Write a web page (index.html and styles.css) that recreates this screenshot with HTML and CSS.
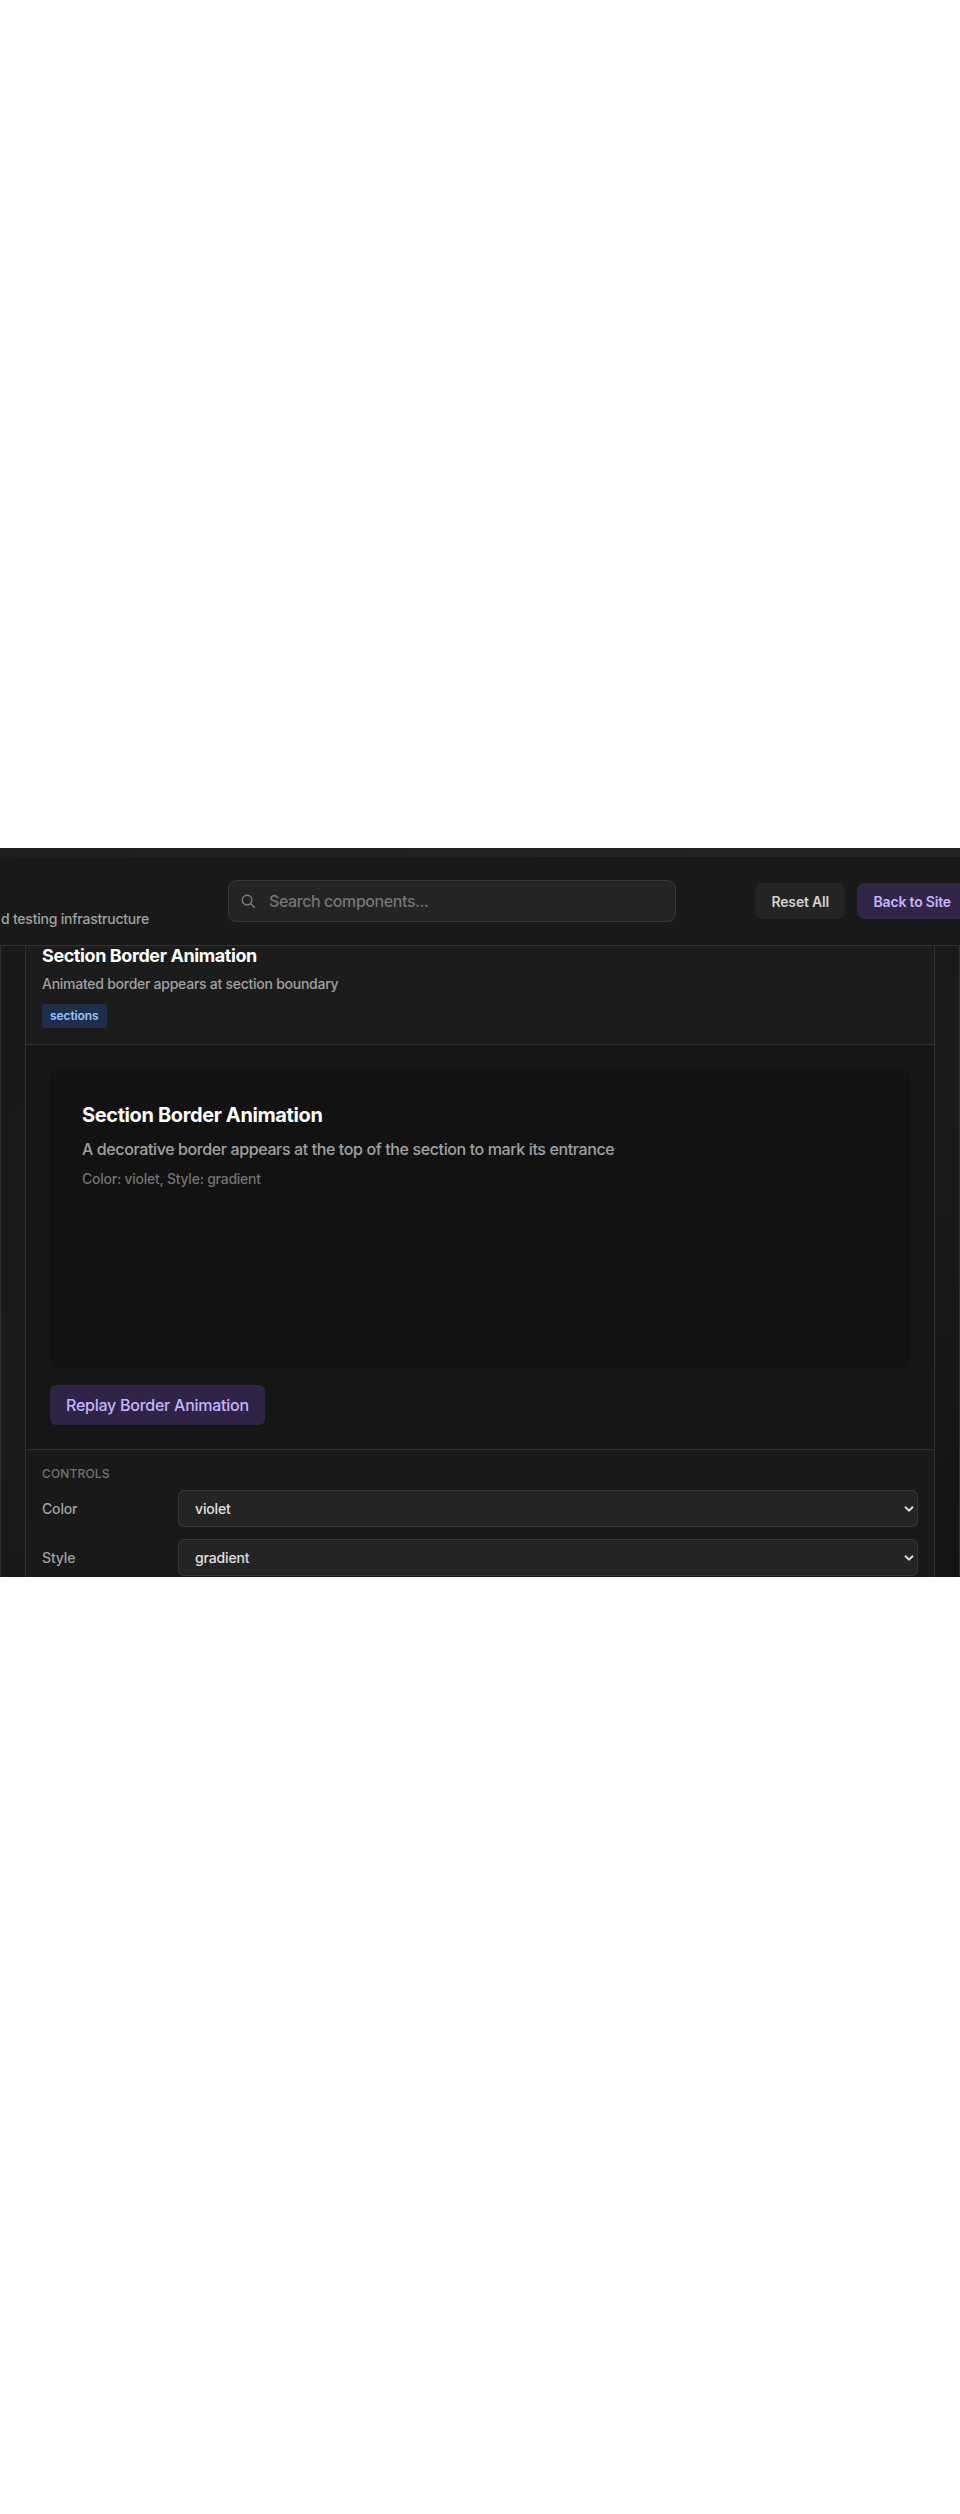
FILE: index.html
```html
<!DOCTYPE html>
<html lang="en">
<head>
<meta charset="utf-8">
<title>Component Playground</title>
<link rel="stylesheet" href="styles.css">
</head>
<body>
<div class="app">
  <header class="header">
    <p class="tagline">d testing infrastructure</p>
    <div class="search">
      <svg class="search-icon" viewBox="0 0 16 16" fill="none" stroke="currentColor" stroke-width="1.4" stroke-linecap="round"><circle cx="6.5" cy="6.5" r="5.2"/><path d="M10.4 10.4 14.2 14.2"/></svg>
      <span class="placeholder">Search components...</span>
    </div>
    <div class="actions">
      <button class="btn btn-reset">Reset All</button>
      <button class="btn btn-back">Back to Site</button>
    </div>
  </header>
  <main class="main">
    <article class="card">
      <div class="card-head">
        <h3 class="card-title">Section Border Animation</h3>
        <p class="card-desc">Animated border appears at section boundary</p>
        <span class="badge">sections</span>
      </div>
      <div class="stage">
        <div class="preview">
          <h4 class="preview-title">Section Border Animation</h4>
          <p class="preview-text">A decorative border appears at the top of the section to mark its entrance</p>
          <p class="preview-meta">Color: violet, Style: gradient</p>
        </div>
        <button class="replay">Replay Border Animation</button>
      </div>
      <div class="controls">
        <h4 class="controls-title">CONTROLS</h4>
        <div class="row">
          <span class="label">Color</span>
          <div class="select"><span>violet</span><svg class="chevron" viewBox="0 0 10 6" fill="none" stroke="currentColor" stroke-width="1.9"><path d="M1 .8 5 4.6 9 .8"/></svg></div>
        </div>
        <div class="row">
          <span class="label">Style</span>
          <div class="select"><span>gradient</span><svg class="chevron" viewBox="0 0 10 6" fill="none" stroke="currentColor" stroke-width="1.9"><path d="M1 .8 5 4.6 9 .8"/></svg></div>
        </div>
      </div>
    </article>
  </main>
</div>
</body>
</html>
```
FILE: styles.css
```css
* { box-sizing: border-box; margin: 0; }
body { background: #fff; padding: 848px 0 937px; font-family: Inter, "Liberation Sans", sans-serif; font-weight: 450; color: #fff; }
button { border: 0; font-family: inherit; white-space: nowrap; }
.app { width: 960px; height: 729px; overflow: hidden; background: linear-gradient(90deg, #1e1e1e, #252525); padding-top: 9px; }
.header { display: flex; height: 89px; overflow: hidden; background: #191919; border-bottom: 1px solid #303030; }
.tagline { flex: none; width: 228px; padding: 52px 0 0 1px; font-size: 14px; line-height: 20px; letter-spacing: -0.22px; color: #a1a1a1; white-space: nowrap; }
.search { display: flex; flex: none; align-items: center; width: 448px; height: 42px; margin-top: 23px; padding-left: 12px; gap: 13px; border: 1px solid #383838; border-radius: 8px; background: #242424; color: #757575; }
.search-icon { width: 15px; height: 15px; color: #808080; }
.placeholder { font-size: 16px; line-height: 24px; letter-spacing: -0.42px; }
.actions { display: flex; flex: none; gap: 12px; margin: 26px 0 0 79px; }
.btn { flex: none; height: 36px; padding: 0 0 0 16.5px; border-radius: 8px; font-size: 14px; font-weight: 600; letter-spacing: -0.18px; text-align: left; }
.btn-reset { width: 90px; background: #242424; color: #d4d4d4; }
.btn-back { width: 111px; background: #312548; color: #c4b5fd; }
.main { height: 631px; padding: 0 24px; border: solid #303030; border-width: 0 1px; background: linear-gradient(160deg, #181818, #1b1b1b 50%, #131313); }
.card { height: 631px; border: solid #303030; border-width: 0 1px; background: #161616; }
.card-head { height: 99px; padding: 0 16px; border-bottom: 1px solid #303030; background: #1c1c1c; }
.card-title { font-size: 18px; font-weight: 700; line-height: 20px; letter-spacing: -0.41px; }
.card-desc { margin-top: 8px; font-size: 14px; line-height: 20px; letter-spacing: -0.26px; color: #a1a1a1; }
.badge { display: block; width: 65px; height: 24px; margin-top: 10px; padding-left: 8px; border-radius: 4px; background: #1f2e4b; color: #93c5fd; font-size: 12px; font-weight: 600; letter-spacing: -0.1px; line-height: 24px; }
.stage { height: 405px; padding: 24px; border-bottom: 1px solid #303030; }
.preview { height: 300px; padding: 32px; border-radius: 8px; background: #121212; }
.preview-title { font-size: 20px; font-weight: 700; line-height: 28px; letter-spacing: -0.38px; }
.preview-text { margin-top: 8px; font-size: 16px; line-height: 24px; letter-spacing: -0.385px; color: #a1a1a1; }
.preview-meta { margin-top: 8px; font-size: 14px; line-height: 20px; letter-spacing: -0.24px; color: #737373; }
.replay { display: block; width: 215px; height: 40px; margin-top: 16px; padding: 0 0 0 16px; border-radius: 6px; background: #2f2346; color: #c4b5fd; font-size: 16px; font-weight: 500; letter-spacing: -0.25px; text-align: left; }
.controls { height: 127px; padding: 16px 16px 0; background: #191919; }
.controls-title { margin-bottom: 8px; font-size: 12px; font-weight: 450; line-height: 16px; letter-spacing: 0.15px; color: #737373; }
.row { display: flex; align-items: center; height: 37px; margin-bottom: 12px; font-size: 14px; letter-spacing: -0.15px; }
.label { width: 136px; color: #a1a1a1; }
.select { display: flex; flex: 1; align-items: center; justify-content: space-between; height: 37px; padding: 0 3px 0 16px; border: 1px solid #383838; border-radius: 6px; background: #242424; color: #e0e0e0; }
.chevron { width: 10px; height: 6px; }
```
